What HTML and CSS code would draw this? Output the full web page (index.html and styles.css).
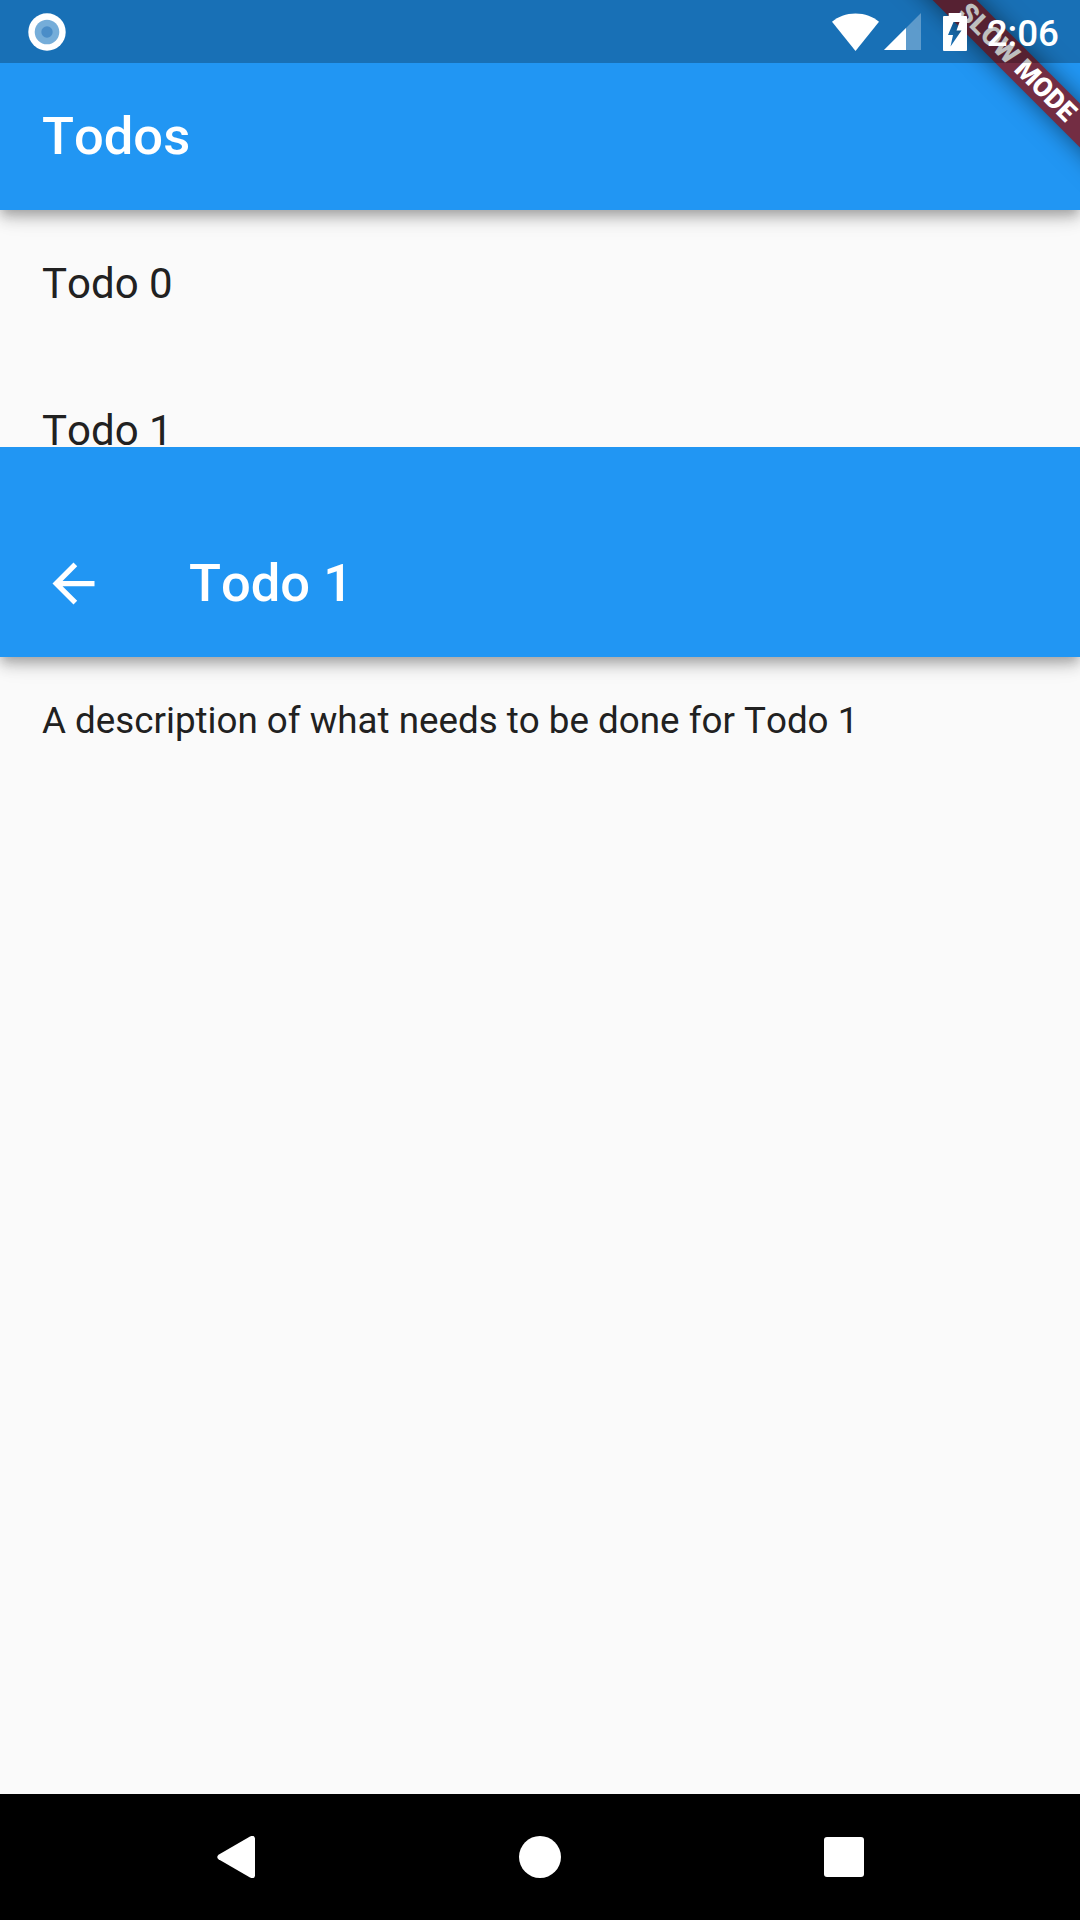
FILE: index.html
```html
<!DOCTYPE html>
<html lang="en">
<head>
<meta charset="utf-8">
<title>Todos</title>
<link rel="stylesheet" href="styles.css">
</head>
<body>
<div class="device">
  <div class="app">
    <main class="screen">
      <header class="app-bar"><h1 class="title">Todos</h1></header>
      <ul class="list">
        <li class="list-item">Todo 0</li>
        <li class="list-item">Todo 1</li>
      </ul>
    </main>
    <section class="screen detail">
      <header class="app-bar">
        <svg class="back" viewBox="0 0 24 24"><path fill="#fff" d="M20 11H7.83l5.59-5.59L12 4l-8 8 8 8 1.41-1.41L7.83 13H20v-2z"/></svg>
        <h2 class="title">Todo 1</h2>
      </header>
      <p class="description">A description of what needs to be done for Todo 1</p>
    </section>
    <div class="banner">SLOW MODE</div>
  </div>
  <div class="status-bar">
    <svg class="recording" viewBox="0 0 38 38"><circle cx="19" cy="19" r="18.7" fill="#fff"/><circle cx="19" cy="19" r="12.3" fill="#75add9"/><circle cx="19" cy="19" r="5.7" fill="#4a8dc8"/></svg>
    <div class="status-icons">
      <svg class="wifi" viewBox="0 0 47 38"><path fill="#fff" d="M23.5 38 0 8.8C6 3.7 14 .5 23.5.5S41 3.7 47 8.8z"/></svg>
      <svg class="signal" viewBox="0 0 37 37"><path fill="#fff" fill-opacity=".3" d="M0 37 37 0v37z"/><path fill="#fff" d="M0 37 22 15v22z"/></svg>
      <svg class="battery" viewBox="0 0 24 38"><path fill="#fff" fill-rule="evenodd" d="M5.700 0h12.600v3H23q1 0 1 1v33q0 1-1 1H1q-1 0-1-1V4q0-1 1-1h4.700zM10.500 9 5 22h5L7.500 33.500l11-16h-5l3-8.500z"/></svg>
      <span class="time">2:06</span>
    </div>
  </div>
  <nav class="nav-bar">
    <svg class="nav-icon" viewBox="0 0 42 42"><path fill="#fff" d="M3.500 18.700q-2.500 2.300 0 4.600L35 41.500q4.500 2 5-2v-37q-.5-4-5-2z"/></svg>
    <svg class="nav-icon" viewBox="0 0 42 42"><circle cx="21" cy="21" r="21" fill="#fff"/></svg>
    <svg class="nav-icon" viewBox="0 0 42 42"><rect x="1" y="1" width="40" height="40" rx="3" fill="#fff"/></svg>
  </nav>
</div>
</body>
</html>
```
FILE: styles.css
```css
* { box-sizing: border-box; }
body {
  margin: 0;
  background: #000;
  font-family: Roboto, "Liberation Sans", sans-serif;
  font-kerning: none;
}
.device {
  position: relative;
  width: 1080px;
  height: 1920px;
  display: flex;
  flex-direction: column;
  overflow: hidden;
}
.app { position: relative; flex: 1; overflow: hidden; }
.screen { height: 1794px; background: #fafafa; color: #212121; overflow: hidden; }
.detail { position: absolute; top: 447px; left: 0; right: 0; }
.app-bar {
  position: relative;
  height: 210px;
  padding: 63px 42px 0;
  display: flex;
  align-items: center;
  background: #2196f3;
  color: #fff;
  box-shadow: 0 5px 10px -2px rgba(0, 0, 0, .2), 0 10px 13px rgba(0, 0, 0, .14), 0 2px 26px rgba(0, 0, 0, .12);
}
.title { margin: 0; padding-bottom: 2px; font-size: 52.5px; font-weight: 500; line-height: 62px; }
.back { width: 63px; height: 63px; margin-right: 84px; }
.list { list-style: none; margin: 0; padding: 0; }
.list-item { height: 147px; padding: 0 42px; display: flex; align-items: center; font-size: 42px; }
.description { margin: 0; padding: 42px; font-size: 36.75px; line-height: 43px; }
.banner {
  position: absolute;
  top: 47px;
  left: 807px;
  width: 420px;
  height: 31px;
  transform: rotate(45deg);
  background: #732d43;
  box-shadow: 0 0 24px rgba(0, 0, 0, .5);
  color: #fff;
  font-size: 26.8px;
  font-weight: 900;
  line-height: 31px;
  text-align: center;
}
.status-bar {
  position: absolute;
  top: 0;
  left: 0;
  right: 0;
  height: 63px;
  padding: 0 21px 0 28px;
  display: flex;
  align-items: center;
  justify-content: space-between;
  background: rgba(0, 0, 0, .25);
}
.recording { width: 38px; height: 38px; }
.status-icons { display: flex; align-items: center; color: #fff; }
.wifi { width: 47px; height: 38px; margin-right: 5px; }
.signal { width: 37px; height: 37px; margin-right: 22px; }
.battery { width: 24px; height: 38px; margin-right: 20px; }
.time { font-size: 36.75px; font-weight: 500; line-height: 43px; padding-top: 3px; }
.nav-bar {
  height: 126px;
  padding: 0 215px;
  display: flex;
  align-items: center;
  justify-content: space-between;
  background: #000;
}
.nav-icon { width: 42px; height: 42px; }
```
